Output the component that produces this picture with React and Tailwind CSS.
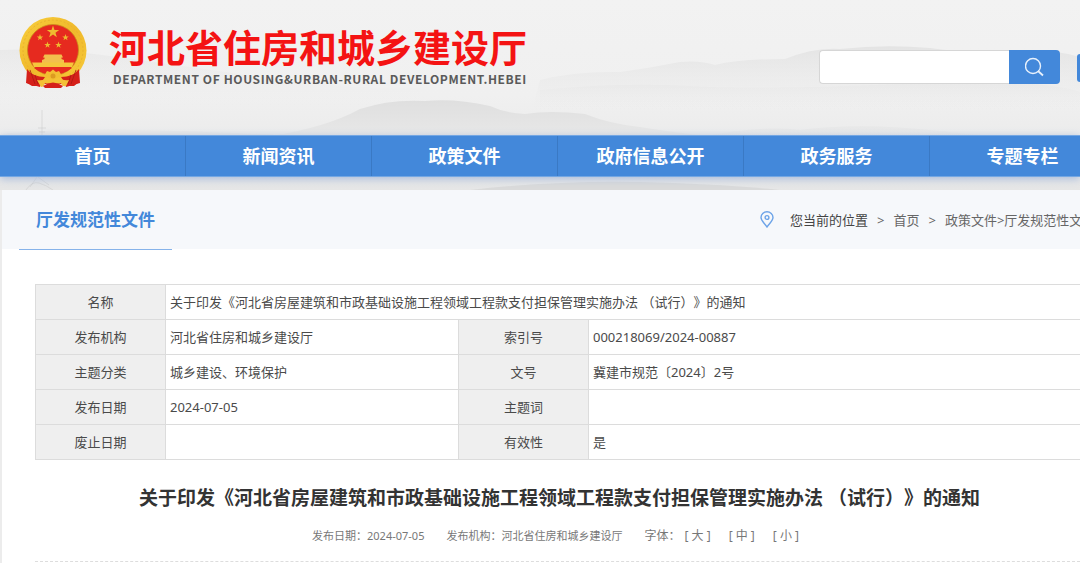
import { useState } from 'react'

const NAV = ['首页', '新闻资讯', '政策文件', '政府信息公开', '政务服务', '专题专栏']

const TITLE = '关于印发《河北省房屋建筑和市政基础设施工程领域工程款支付担保管理实施办法 （试行）》的通知'

const ROWS = [
  ['发布机构', '河北省住房和城乡建设厅', '索引号', '000218069/2024-00887'],
  ['主题分类', '城乡建设、环境保护', '文号', '冀建市规范〔2024〕2号'],
  ['发布日期', '2024-07-05', '主题词', ''],
  ['废止日期', '', '有效性', '是'],
]

function Star({ x, y, r }) {
  const points = Array.from({ length: 10 }, (_, i) => {
    const radius = i % 2 ? r * 0.4 : r
    const a = (Math.PI / 5) * i - Math.PI / 2
    return `${x + radius * Math.cos(a)},${y + radius * Math.sin(a)}`
  }).join(' ')
  return <polygon points={points} fill="#eebb30" />
}

function Emblem() {
  return (
    <svg viewBox="0 0 68 72" className="w-[68px] h-[72px] shrink-0" role="img" aria-label="国徽">
      <defs>
        <linearGradient id="gold" x1="0" y1="0" x2="1" y2="1">
          <stop offset="0" stopColor="#f8cf3c" />
          <stop offset="0.5" stopColor="#f0b92c" />
          <stop offset="1" stopColor="#f7cb3a" />
        </linearGradient>
      </defs>
      {/* drapery behind the ring */}
      <path d="M9 50 Q12 55 20 56 L48 56 Q56 55 60 50 L60 66 L55 70 L48 70 L44 68 L24 68 L20 70 L13 70 L8 67Z" fill="#d5201a" />
      <circle cx="34" cy="34.500" r="33.500" fill="url(#gold)" />
      <circle cx="34" cy="34" r="30" fill="none" stroke="#eab22e" strokeWidth="1" strokeDasharray="2 2" />
      <circle cx="34" cy="34" r="25.500" fill="#e62a1f" stroke="#c98d1c" strokeWidth="0.800" />
      <Star x={34} y={16} r={6.5} />
      <Star x={21} y={21.5} r={3.4} />
      <Star x={46.5} y={21.5} r={3.4} />
      <Star x={28.5} y={29} r={3.4} />
      <Star x={39.5} y={29} r={3.4} />
      {/* gate tower */}
      <path d="M25.500 38.500 H42.500 L44 41.500 H42.500 V43 L45 44 V47 H23 V44 L25.500 43 V41.500 H24Z" fill="#f2bf4d" />
      <path d="M13 46.500 H55 L53 51 H15Z" fill="#f5c63c" />
      <path d="M15 52 H53 Q46 58 34 58 T15 52Z" fill="#e62a1f" />
      {/* ribbon folds on both sides */}
      <path d="M8 53 Q14 61 26 61 L22 67 L21 71 L14 69 L7 67Z M60 53 Q54 61 42 61 L46 67 L47 71 L54 69 L61 67Z" fill="#d5201a" />
      <path d="M11 54 L16 68 M16 59 L19 68 M57 54 L52 68 M52 59 L49 68" stroke="#a81913" strokeWidth="0.800" />
      {/* cog wheel and knot */}
      <path d="M25 60 L28 55 L31 56 L34 53.500 L37 56 L40 55 L43 60 L38 64 H30Z" fill="#f2bd31" />
      <circle cx="34" cy="60" r="2.500" fill="#dc9a21" />
      <path d="M18 64 Q26 65 28 61 L34 64 L40 61 Q43 65 50 64 L47 70 Q43 71 42 67 Q36 65 34 67 Q31 65 26 67 Q25 71 22 71Z" fill="#f4c136" />
      <path d="M24 70 Q34 63 44 70 L42 72 H26Z" fill="#d5201a" />
    </svg>
  )
}

function Mountains() {
  return (
    <svg
      viewBox="0 0 1080 190"
      preserveAspectRatio="none"
      className="absolute inset-0 w-full h-full"
      aria-hidden="true"
    >
      <defs>
        <linearGradient id="ridge" x1="0" y1="0" x2="0" y2="1">
          <stop offset="0" stopColor="#dedede" />
          <stop offset="1" stopColor="#efefef" stopOpacity="0" />
        </linearGradient>
        <linearGradient id="near" x1="0" y1="0" x2="0" y2="1">
          <stop offset="0" stopColor="#dfdfdf" />
          <stop offset="1" stopColor="#ebebeb" />
        </linearGradient>
      </defs>
      <path d="M0 50 Q50 48 110 56 T260 77 T420 88 V110 H0Z" fill="url(#ridge)" opacity="0.4" />
      <path d="M540 80 Q575 71 620 72 Q650 68 680 62 Q700 60 715 65 Q740 59 785 59 Q815 47 840 49 Q885 44 930 48 Q970 54 1010 51 T1080 57 V118 H530Z" fill="url(#ridge)" opacity="0.7" />
      <path d="M540 90 Q620 82 690 86 T900 84 T1080 92 V115 H540Z" fill="url(#ridge)" opacity="0.25" />
      <path d="M270 136 Q325 128 360 109 Q390 99 425 101 Q455 98 490 106 Q505 113 525 114 Q550 110 585 114 Q610 124 640 127 Q670 132 710 136 V150 H270Z" fill="url(#near)" />
      <path d="M700 137 Q760 125 800 130 Q860 122 940 131 T1080 136 V145 H700Z" fill="url(#near)" opacity="0.35" />
      <path d="M0 134 Q60 129 130 130 T300 136 V150 H0Z" fill="#dedede" opacity="0.3" />
      <path d="M470 190 Q560 180 640 182 T780 190Z" fill="#dadada" />
      <g stroke="#c9c9c9" fill="none" opacity="0.5">
        <path d="M42 110 V136 M38 128 H46 M39 132 H45 M37 177 L30 187 M38 177 L49 185 M26 190 Q32 181 39 183 T53 190" />
      </g>
    </svg>
  )
}

function SearchIcon() {
  return (
    <svg viewBox="0 0 20 20" className="w-5 h-5" fill="none" stroke="#e8f1fc" aria-hidden="true">
      <circle cx="8" cy="9" r="7.500" strokeWidth="1.400" />
      <path d="M13 14 L18 18.500" strokeWidth="1.800" />
    </svg>
  )
}

function PinIcon() {
  return (
    <svg viewBox="0 0 14 17" className="w-3.5 h-[17px] mr-4 shrink-0" fill="none" stroke="#6ca3e8" aria-hidden="true">
      <path d="M7 16 C5 12.500 1 10 1 6.500 A6 5.700 0 0 1 13 6.500 C13 10 9 12.500 7 16Z" strokeWidth="1.400" />
      <circle cx="7" cy="6.500" r="1.900" strokeWidth="1.400" />
    </svg>
  )
}

function Header() {
  return (
    <div className="relative flex items-start h-[135px] pt-4 pl-[19px] overflow-hidden">
      <Emblem />
      <div className="ml-[22px] pt-[7px] shrink-0 whitespace-nowrap">
        <h1 className="text-[38px] leading-[48px] font-bold text-[#f41313]">河北省住房和城乡建设厅</h1>
        <p className="ml-1 font-['Noto_Sans_CJK_SC',sans-serif] text-xs leading-4 font-bold tracking-wider text-[#5a5a5a]">
          DEPARTMENT OF HOUSING&amp;URBAN-RURAL DEVELOPMENT.HEBEI
        </p>
      </div>
      <form className="ml-auto mt-[34px] flex shrink-0" onSubmit={e => e.preventDefault()}>
        <input
          type="text"
          aria-label="搜索"
          className="w-[190px] h-[34px] px-3 text-sm bg-white border border-r-0 border-[#d6d6d6] rounded-l outline-none"
        />
        <button
          type="submit"
          aria-label="搜索"
          className="w-[51px] h-[34px] flex items-center justify-center bg-[#4388da] rounded-r"
        >
          <SearchIcon />
        </button>
      </form>
      <div className="ml-[17px] mt-[38px] w-[3px] h-7 bg-[#4388da] rounded-l shrink-0" />
    </div>
  )
}

function Breadcrumb() {
  return (
    <nav className="flex items-center w-80 shrink-0 overflow-hidden whitespace-nowrap text-[13px] leading-5 text-[#666]">
      <PinIcon />
      <span className="shrink-0 text-[#444]">您当前的位置</span>
      <span className="shrink-0 mx-[9px]">&gt;</span>
      <a href="#home" className="shrink-0">首页</a>
      <span className="shrink-0 mx-[9px]">&gt;</span>
      <a href="#policy" className="shrink-0">政策文件</a>
      <span className="shrink-0">&gt;</span>
      <a href="#rules" className="shrink-0">厅发规范性文件</a>
    </nav>
  )
}

const th = 'border border-[#dcdcdc] bg-[#efefef] font-normal text-center'
const td = 'border border-[#dcdcdc] px-1'

function InfoTable() {
  return (
    <table className="w-full table-fixed border-collapse text-[13px] leading-5 text-[#4a4a4a]">
      <colgroup>
        <col className="w-[130px]" />
        <col className="w-[293px]" />
        <col className="w-[130px]" />
        <col />
      </colgroup>
      <tbody>
        <tr className="h-[35px]">
          <th scope="row" className={th}>名称</th>
          <td colSpan={3} className={`${td} border-r-0`}>{TITLE}</td>
        </tr>
        {ROWS.map(([k1, v1, k2, v2]) => (
          <tr key={k1} className="h-[35px]">
            <th scope="row" className={th}>{k1}</th>
            <td className={td}>{v1}</td>
            <th scope="row" className={th}>{k2}</th>
            <td className={`${td} border-r-0`}>{v2}</td>
          </tr>
        ))}
      </tbody>
    </table>
  )
}

export default function App() {
  const [size, setSize] = useState('中')

  return (
    <div className="min-h-screen overflow-hidden bg-[#ececec] font-['Noto_Sans','Noto_Sans_CJK_SC',sans-serif] [text-spacing-trim:space-all]">
      <div className="relative bg-linear-to-b from-[#f2f2f2] via-[#f0f0f0] to-[#e6e6e6] pb-[13px]">
        <Mountains />
        <Header />
        <nav className="relative flex h-[42px] overflow-hidden bg-[#4388da] border-y border-[#74a7e3] shadow-[0_2px_8px_#a9bcdc]">
          {NAV.map(item => (
            <a
              key={item}
              href="#nav"
              className="w-[186px] shrink-0 border-r border-[#3a79c4] text-center text-lg leading-10 font-bold text-white"
            >
              {item}
            </a>
          ))}
        </nav>
      </div>

      <main className="relative ml-0.5 bg-white">
        <div className="flex justify-between h-[59px] bg-[#f6f8fb] pl-[17px]">
          <h2 className="h-[60px] px-[17px] border-b border-[#86b3ea] text-[17px] leading-[60px] font-bold text-[#4388da]">
            厅发规范性文件
          </h2>
          <Breadcrumb />
        </div>

        <div className="pt-[35px] pl-[33px]">
          <InfoTable />
          <h3 className="mt-6 pl-1 text-center text-[19px] leading-7 font-bold text-[#333]">{TITLE}</h3>
          <div className="mt-3.5 pr-1 flex justify-center items-center text-[11px] leading-5 text-[#777]">
            <span className="mr-[22px]">发布日期：2024-07-05</span>
            <span className="mr-[22px]">发布机构：河北省住房和城乡建设厅</span>
            <span className="flex gap-[18px] text-xs leading-5">
              <span className="-mr-3.5">字体：</span>
              {['大', '中', '小'].map(s => (
                <button key={s} type="button" aria-pressed={size === s} onClick={() => setSize(s)}>
                  [ {s} ]
                </button>
              ))}
            </span>
          </div>
          <div className="mt-[15px] h-3 border-t border-dashed border-[#ddd]" />
        </div>
      </main>
    </div>
  )
}
